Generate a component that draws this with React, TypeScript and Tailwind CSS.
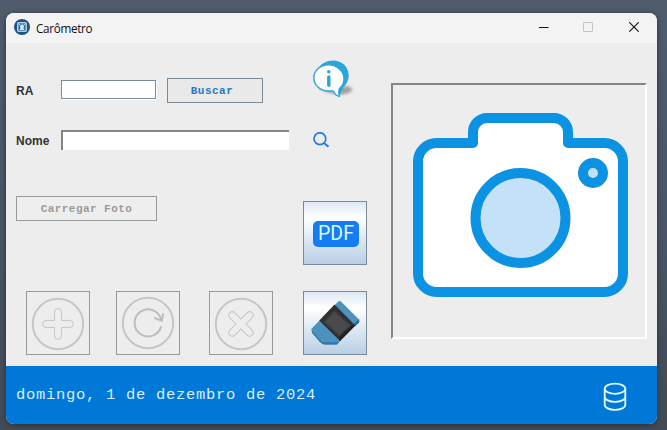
import type { ReactNode } from "react";

function AppIcon() {
  return (
    <svg width="16" height="16" viewBox="0 0 16 16">
      <circle cx="8" cy="8" r="8" fill="#1b5587" />
      <rect x="3.8" y="3.8" width="8.4" height="8.4" rx="0.8" fill="#2d6e9e" stroke="#e6f3fa" strokeWidth="1.1" />
      <circle cx="8" cy="7.6" r="2" fill="#d5ebf6" />
      <path d="M5.4 11l1.6-2.2h2L10.6 11z" fill="#d5ebf6" />
      <path d="M5.2 5.4h1M9.8 5.4h1" stroke="#e6f3fa" />
    </svg>
  );
}

function TitleBar() {
  return (
    <header className="flex h-[30px] shrink-0 items-center bg-[#f3f3f3] pl-2 pr-[18px]">
      <div className="mb-0.5"><AppIcon /></div>
      <span className="ml-1.5 font-['Open_Sans','Noto_Sans',sans-serif] text-[11.7px] leading-4 tracking-[-0.3px] text-[#111]">Carômetro</span>
      <div className="ml-auto mb-0.5 flex items-center gap-[35px]">
        <svg width="10" height="10" viewBox="0 0 10 10">
          <path d="M-.5 5.5h10" stroke="#111" />
        </svg>
        <svg className="-ml-px mr-px" width="10" height="10" viewBox="0 0 10 10">
          <rect x="0.5" y="0.5" width="9" height="9" rx="0.6" fill="none" stroke="#c4c4c4" />
        </svg>
        <svg width="10" height="10" viewBox="0 0 10 10">
          <path d="M0.3 0.3l9.4 9.4M9.7 0.3l-9.4 9.4" stroke="#111" strokeWidth="1.1" />
        </svg>
      </div>
    </header>
  );
}

function InfoIcon() {
  return (
    <svg className="block" width="44" height="40" viewBox="0 0 44 40">
      <defs>
        <filter id="soft" x="-30%" y="-50%" width="160%" height="200%">
          <feGaussianBlur stdDeviation="1.5" />
        </filter>
      </defs>
      <path d="M5 27C14 34 20 33 24 34C31 35 40 33 39 29C38 26 32 25 27 27z" fill="#777" opacity="0.65" filter="url(#soft)" />
      <path d="M4 10C8 3 14 .4 20 .4C29 .4 35.7 7 35.7 15.5C35.7 20.5 33.5 24.5 30 27.5L26.5 36.6L22 30z" fill="#29a6dc" />
      <path d="M15.5 4.8C7.5 4.8.8 10.4.8 17.8C.8 25.2 7 30.5 15 31C18 31.2 19.5 30.8 20.5 31.2C21.5 33.5 23.5 35.7 26.3 36.4C25.6 33.5 25.7 31 26.3 28.7C29.5 26.2 31 23 31 18.8C31 11 24 4.8 15.5 4.8z" fill="#fff" stroke="#29a6dc" strokeWidth="1.4" />
      <circle cx="15.8" cy="11.8" r="1.8" fill="#29a6dc" />
      <path d="M15.8 17v8.2" stroke="#29a6dc" strokeWidth="3.4" strokeLinecap="round" />
    </svg>
  );
}

function SearchIcon() {
  return (
    <svg width="16" height="16" viewBox="0 0 16 16" fill="none" stroke="#267be8" strokeWidth="1.7">
      <circle cx="6.9" cy="6.7" r="5.9" />
      <path d="M10.7 10.8l4.8 3.9" strokeWidth="2" />
    </svg>
  );
}

function DisabledTool({ label, children }: { label: string; children: ReactNode }) {
  return (
    <button aria-label={label} disabled className="flex size-16 items-center justify-center border border-[#999] bg-[#ededed]">
      <svg width="62" height="62" viewBox="0 0 62 62" fill="none" stroke="#c6c6c6">
        {children}
      </svg>
    </button>
  );
}

function PictureButton({ label, children }: { label: string; children: ReactNode }) {
  return (
    <button aria-label={label} className="flex size-16 items-center justify-center border border-[#7a8a99] bg-linear-to-b from-[#dde8f3] via-white via-25% to-[#b8cfe5]">
      {children}
    </button>
  );
}

const PLUS = "M27.5 28.4V20a3.5 3.5 0 0 1 7 0v8.4h8.4a3.5 3.5 0 0 1 0 7h-8.4v8.4a3.5 3.5 0 0 1-7 0v-8.4h-8.4a3.5 3.5 0 0 1 0-7z";

function EraserIcon() {
  return (
    <svg width="62" height="62" viewBox="0 0 62 62">
      <path d="M16 28L8 36.3Q6.5 38 8 40L15.5 49.5Q18.5 52.5 21 52.5H33L37 48.5z" fill="#4d91bd" />
      <path d="M8 39L18 50H35L33 52.5H20.5Q18 52.5 15.5 49.5L8 41z" fill="#347aa7" />
      <path d="M30.5 13.5L34 9.8Q35.5 8.3 37.5 10L54.5 27Q56 29 54.3 31L51 34z" fill="#4d91bd" />
      <path d="M49.5 32L55.3 27V30.3L51 34.5z" fill="#276b98" />
      <path d="M30.5 12.5L51.3 33.5L36 49L15.3 28.5z" fill="#303030" />
      <path d="M46.5 33.5L51.3 33.5L36 49L35 44.5z" fill="#202020" />
      <path d="M30.5 18.7L46.5 33.5L35.3 43.5L20.5 29.8z" fill="#4a4a4a" stroke="#3d3d3d" strokeWidth="1.4" />
    </svg>
  );
}

function CameraIcon() {
  return (
    <svg width="215" height="184" viewBox="0 0 215 184" stroke="#0c92e2" strokeWidth="10">
      <path d="M60 30V19A14 14 0 0 1 74 5H141A14 14 0 0 1 155 19V30H191.500A18.500 18.500 0 0 1 210 48.500V160.500A18.500 18.500 0 0 1 191.500 179H23.500A18.500 18.500 0 0 1 5 160.500V48.500A18.500 18.500 0 0 1 23.500 30z" fill="#fff" strokeLinejoin="round" />
      <circle cx="107.5" cy="105" r="45" fill="#c3e2f7" />
      <circle cx="180" cy="60" r="10" fill="#c3e2f7" />
    </svg>
  );
}

function Footer() {
  return (
    <footer className="flex h-[58px] shrink-0 items-center justify-between bg-[#0078d7] pl-2.5 pr-[30px]">
      <span className="whitespace-pre font-['Liberation_Mono',monospace] text-[15.5px] leading-5 tracking-[0.7px] text-[#d9efff]">domingo, 1 de dezembro de 2024</span>
      <svg className="mt-1" width="24" height="30" viewBox="0 0 24 30" fill="none" stroke="#e4fbff" strokeWidth="1.8">
        <ellipse cx="12" cy="6.7" rx="10.3" ry="5.1" />
        <path d="M1.7 6.7v16c0 2.9 4.6 5.1 10.3 5.1s10.3-2.2 10.3-5.1v-16M1.7 14.7c0 2.9 4.6 5.1 10.3 5.1s10.3-2.2 10.3-5.1" />
      </svg>
    </footer>
  );
}

export default function App() {
  return (
    <div className="h-[430px] w-[667px] overflow-hidden bg-linear-to-b from-[#505c6c] via-[#4b5665] to-[#414a55] pl-1.5 pt-[13px] font-['Liberation_Sans',Arial,sans-serif]">
      <div className="flex h-[411px] w-[651px] flex-col overflow-hidden rounded-lg bg-[#ededed] shadow-[0_1px_5px_#27303a]">
        <TitleBar />
        <main className="flex grow pl-2.5">
          <div className="flex w-[375px] shrink-0 flex-col pt-[17px]">
            <div className="flex h-[43px] items-start text-xs font-bold text-[#333]">
              <label htmlFor="ra" className="w-[45px] pt-[23px] leading-4">RA</label>
              <input id="ra" className="mt-5 h-[19px] w-[95px] border border-[#7a8a99] bg-white shadow-[1px_1px_0_white]" />
              <button className="ml-[11px] mt-[18px] h-[25px] w-24 border border-[#7a8a99] bg-[#e9e9e9] pr-1.5 pt-0.5 font-['Liberation_Mono',monospace] text-[11px] tracking-[0.5px] text-[#2479c7]">Buscar</button>
              <div className="ml-[50px]"><InfoIcon /></div>
            </div>
            <div className="mt-[27px] flex h-5 items-center text-xs font-bold text-[#333]">
              <label htmlFor="nome" className="w-[45px] pt-0.5 leading-4">Nome</label>
              <input id="nome" className="h-5 w-[228px] border-l-2 border-t-2 border-[#858585] bg-white" />
              <div className="ml-6"><SearchIcon /></div>
            </div>
            <div className="mt-[46px] flex h-[69px] items-start">
              <button disabled className="h-[25px] w-[141px] border border-[#999] bg-[#eee] pt-0.5 font-['Liberation_Mono',monospace] text-[11px] font-bold tracking-[0.45px] text-[#999]">Carregar Foto</button>
              <div className="ml-[146px] mt-[5px]">
                <PictureButton label="PDF">
                  <span className="ml-0.5 mt-0.5 flex h-[26px] w-[46px] items-center justify-center rounded-[5px] bg-[#147df5] font-['Roboto',sans-serif] text-[19.5px] leading-none text-[#ddfaff]">PDF</span>
                </PictureButton>
              </div>
            </div>
            <div className="mt-[26px] flex pl-2.5">
              <DisabledTool label="Adicionar">
                <circle cx="31" cy="32" r="25.2" strokeWidth="2" />
                <path d={PLUS} />
              </DisabledTool>
              <div className="ml-[26px]">
                <DisabledTool label="Atualizar">
                  <circle cx="31" cy="31" r="25.2" strokeWidth="2" />
                  <path d="M44.3 28A13.5 13.5 0 1 0 44.2 34.3M37.3 26L44.8 28.7L46.3 21.3" strokeWidth="2" stroke="#bcbcbc" />
                </DisabledTool>
              </div>
              <div className="ml-[29px]">
                <DisabledTool label="Excluir">
                  <circle cx="31" cy="32" r="25.2" strokeWidth="2" />
                  <path d={PLUS} transform="translate(31 32) rotate(45) scale(1.02) translate(-31 -31.9)" />
                </DisabledTool>
              </div>
              <div className="ml-[30px]">
                <PictureButton label="Limpar"><EraserIcon /></PictureButton>
              </div>
            </div>
          </div>
          <div className="mt-10 flex size-64 shrink-0 items-start border-2 border-b-white border-l-[#858585] border-r-white border-t-[#858585] pl-5 pt-7">
            <CameraIcon />
          </div>
        </main>
        <Footer />
      </div>
    </div>
  );
}
